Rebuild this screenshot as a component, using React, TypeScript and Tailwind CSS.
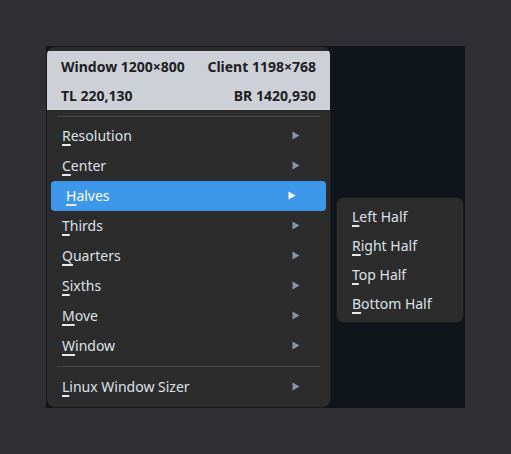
import React from "react";

const items = [
  "Resolution",
  "Center",
  "Halves",
  "Thirds",
  "Quarters",
  "Sixths",
  "Move",
  "Window",
];

const halves = ["Left Half", "Right Half", "Top Half", "Bottom Half"];

function Mnemonic({ label }: { label: string }) {
  return (
    <span>
      <span className="underline decoration-2 underline-offset-[3px] decoration-[#e6e8ec]">
        {label[0]}
      </span>
      {label.slice(1)}
    </span>
  );
}

function Arrow({ active }: { active?: boolean }) {
  return (
    <svg width="8" height="9" viewBox="0 0 8 9" className="shrink-0">
      <path d="M0.5 0.5 L7.5 4.5 L0.5 8.5 Z" fill={active ? "#ffffff" : "#8393a8"} />
    </svg>
  );
}

function MenuRow({ label, active }: { label: string; active?: boolean }) {
  return (
    <div
      className={`mx-[4px] h-[30px] flex items-center justify-between rounded-[4px] leading-[18px] pb-px ${
        active ? "bg-[#3d97ea] pl-[15px] pr-[30px] text-white" : "pl-[11px] pr-[26px] text-[#dce1e8]"
      }`}
    >
      <Mnemonic label={label} />
      <Arrow active={active} />
    </div>
  );
}

export default function App() {
  return (
    <div
      className="w-[511px] h-[454px] bg-[#2f2e33] pl-[46px] pt-[46px] text-[14px]"
      style={{ fontFamily: '"Noto Sans", "Open Sans", sans-serif' }}
    >
      <div className="relative w-[419px] h-[362px] bg-[#10141b]">
        <div className="w-[285px] h-[362px] rounded-[9px] border border-[#1a1a1a] bg-[#2c2c2c] overflow-hidden pt-[4px]">
          <div className="bg-[#cdd0d6] h-[59px] px-[14px] flex flex-col justify-center gap-[10px] text-[14px] font-bold text-[#1e2024] leading-[19px]">
            <div className="flex justify-between">
              <span>Window 1200×800</span>
              <span>Client 1198×768</span>
            </div>
            <div className="flex justify-between">
              <span>TL 220,130</span>
              <span>BR 1420,930</span>
            </div>
          </div>
          <div className="mx-[10px] mt-[6px] h-px bg-[#464648]" />
          <div className="pt-[4px]">
            {items.map((it) => (
              <MenuRow key={it} label={it} active={it === "Halves"} />
            ))}
          </div>
          <div className="mx-[10px] mt-[5px] mb-[5px] h-px bg-[#464648]" />
          <MenuRow label="Linux Window Sizer" />
        </div>

        <div className="absolute left-[290px] top-[151px] w-[128px] h-[126px] rounded-[8px] border border-[#1d1d1d] bg-[#2c2c2c] pt-[4px] text-[#dce1e8]">
          {halves.map((h) => (
            <div key={h} className="h-[29px] flex items-center pl-[15px] leading-[18px]">
              <Mnemonic label={h} />
            </div>
          ))}
        </div>
      </div>
    </div>
  );
}
